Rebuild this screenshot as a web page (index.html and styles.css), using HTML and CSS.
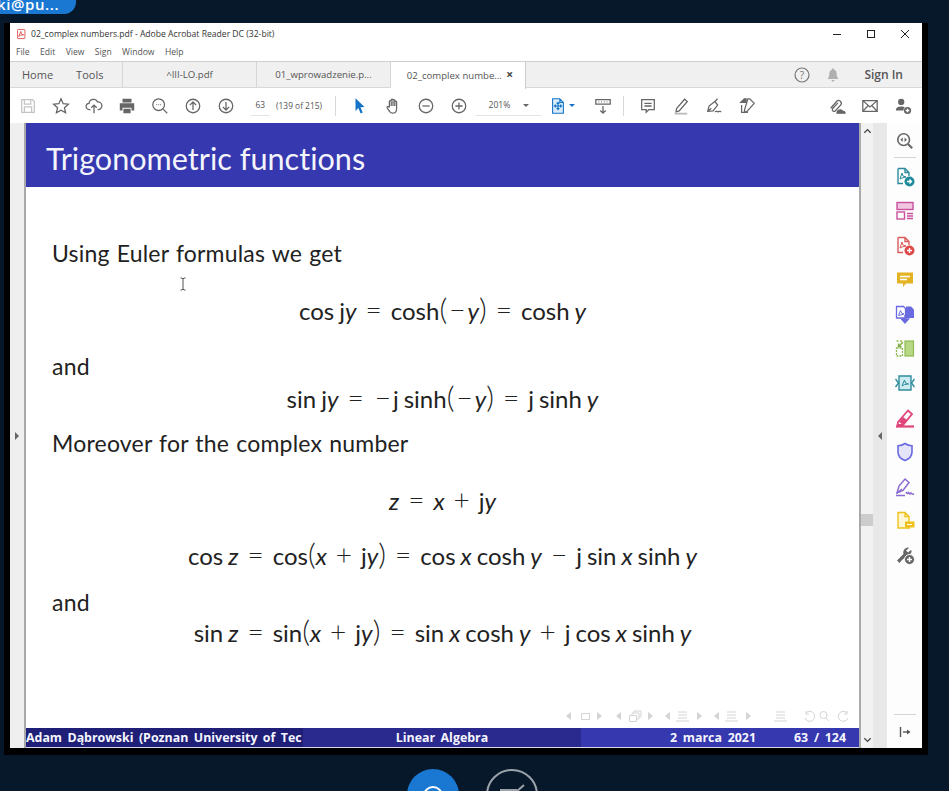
FILE: index.html
```html
<!DOCTYPE html>
<html lang="pl">
<head>
    <meta charset="UTF-8">
    <meta name="viewport" content="width=device-width, initial-scale=1.0">
    <title>02_complex numbers.pdf - Adobe Acrobat Reader DC (32-bit)</title>
    <link rel="stylesheet" href="styles.css">
</head>
<body>
    <div class="name-pill"><span>ki@pu...</span></div>

    <div class="frame">
        <div class="title-bar">
            <svg class="pdf-icon" viewBox="0 0 12 12"><rect x="0.5" y="0.5" width="9" height="11" rx="1" fill="#fff" stroke="#d9453d"/><path d="M2 9l2.5-6 1 3 2.5 1-4 .5z" fill="none" stroke="#d9453d" stroke-width="1"/></svg>
            <span class="title-text">02_complex numbers.pdf - Adobe Acrobat Reader DC (32-bit)</span>
            <div class="win-buttons">
                <svg viewBox="0 0 12 12"><path d="M2 6.500h8" stroke="#222" stroke-width="1"/></svg>
                <svg viewBox="0 0 12 12"><rect x="2.500" y="2.500" width="7" height="7" fill="none" stroke="#222"/></svg>
                <svg viewBox="0 0 12 12"><path d="M2 2l8 8M10 2l-8 8" stroke="#222" stroke-width="1"/></svg>
            </div>
        </div>
        <div class="menu-bar">
            <span>File</span><span>Edit</span><span>View</span><span>Sign</span><span>Window</span><span>Help</span>
        </div>

        <div class="tab-bar">
            <div class="tab-home"><span>Home</span><span>Tools</span></div>
            <div class="tab">^III-LO.pdf</div>
            <div class="tab">01_wprowadzenie.p...</div>
            <div class="tab active">02_complex numbe... <b class="tab-close">×</b></div>
            <div class="tab-right">
                <svg class="ico16" viewBox="0 0 16 16"><circle cx="8" cy="8" r="7" fill="none" stroke="#777" stroke-width="1.200"/><text x="8" y="11.500" class="help-mark">?</text></svg>
                <svg class="ico16" viewBox="0 0 16 16"><path d="M8 1.500c-.8 0-1.200.6-1.200 1.200C5 3.300 4.300 5 4.300 7c0 2.500-.8 3.500-1.800 5h11c-1-1.500-1.800-2.500-1.800-5 0-2-.7-3.700-2.500-4.300C9.200 2.100 8.800 1.500 8 1.500zM6.500 13a1.500 1.500 0 003 0z" fill="#b0b0b0"/></svg>
                <span class="sign-in">Sign In</span>
            </div>
        </div>

        <div class="tool-bar">
            <div class="tool"><svg viewBox="0 0 20 20" class="light"><path d="M3 3h12l2 2v12H3zM6 3v5h7V3M6 17v-6h8v6"/></svg></div>
            <div class="tool"><svg viewBox="0 0 20 20"><path d="M10 2l2.400 5.400 5.800.6-4.400 3.900 1.300 5.700-5.100-3-5.100 3 1.300-5.700L1.800 8l5.800-.6z"/></svg></div>
            <div class="tool"><svg viewBox="0 0 20 20"><path d="M6 14H5a3.500 3.500 0 01-.5-7A5 5 0 0114 5.500a4 4 0 011 8.500h-1M10 18V9M7 12l3-3 3 3"/></svg></div>
            <div class="tool"><svg viewBox="0 0 20 20" class="solid"><path d="M5 2h10v4H5zM2 7h16v8h-3v-3H5v3H2zM6 13h8v5H6z"/></svg></div>
            <div class="tool"><svg viewBox="0 0 20 20"><circle cx="8.500" cy="8.500" r="6.500"/><path d="M13.500 13.500L18 18M6 8.500h.8M8.200 8.500h.8M10.400 8.500h.8"/></svg></div>
            <div class="tool"><svg viewBox="0 0 20 20"><circle cx="10" cy="10" r="7.500"/><path d="M10 14.500v-9M6.500 9L10 5.500 13.500 9"/></svg></div>
            <div class="tool"><svg viewBox="0 0 20 20"><circle cx="10" cy="10" r="7.500"/><path d="M10 5.500v9M6.500 11l3.500 3.500 3.500-3.500"/></svg></div>
            <div class="page-box"><span class="page-num">63</span><span>(139 of 215)</span></div>
            <div class="tool-sep"></div>
            <div class="tool"><svg viewBox="0 0 20 20" class="blue"><path d="M5 1.500l10 9.500-4.500.3 2.500 6-2.300 1-2.500-6L5 15.500z"/></svg></div>
            <div class="tool"><svg viewBox="0 0 20 20"><path d="M6 11V5a1 1 0 012 0V3.500a1 1 0 012 0V4a1 1 0 012 0v1.500a1 1 0 012 0V13c0 3-2 5-4.500 5S7 17 5.500 15L3.500 12c-.6-1 .7-2 1.500-1z"/><path d="M8 5v5M10 4v6M12 5v5"/></svg></div>
            <div class="tool"><svg viewBox="0 0 20 20"><circle cx="10" cy="10" r="7.500"/><path d="M6 10h8"/></svg></div>
            <div class="tool"><svg viewBox="0 0 20 20"><circle cx="10" cy="10" r="7.500"/><path d="M6 10h8M10 6v8"/></svg></div>
            <div class="zoom-box"><span>201%</span><i class="caret"></i></div>
            <div class="tool tool-fit"><svg viewBox="0 0 20 20" class="blue-line"><path d="M4 2h8l4 4v12H4zM12 2v4h4M10 6v8M6 10h8M8.500 7.500L10 6l1.500 1.500M8.500 12.500L10 14l1.500-1.500M7.500 8.500L6 10l1.500 1.500M12.500 8.500L14 10l-1.500 1.500"/></svg><i class="caret blue-caret"></i></div>
            <div class="tool tool-ruler"><svg viewBox="0 0 20 20"><path d="M2 3h16v5H2zM5 5.500h.8M8 5.500h.8M11 5.500h.8M14 5.500h.8M10 10v8M7 15l3 3 3-3"/></svg></div>
            <div class="tool-sep sep-b"></div>
            <div class="tool"><svg viewBox="0 0 20 20"><path d="M3 3h14v11h-6l-3 3v-3H3zM6 7h8M6 10h8"/></svg></div>
            <div class="tool"><svg viewBox="0 0 20 20"><path d="M5 13L14 2.500l3 2.500-9 10.500-3.500 1z"/><path d="M3 18.500h14" stroke="#bbb" stroke-width="2"/></svg></div>
            <div class="tool"><svg viewBox="0 0 20 20"><path d="M3 16l1.500-6L11 5l3 4-5 6.500zM3 16l4-3.500M11 5l3-3M11 16c1 1 1.500-1 2.500 0s1.500 0 2.500 0 1 .5 2 0"/></svg></div>
            <div class="tool"><svg viewBox="0 0 20 20"><path d="M9 2H7L3 6h6z" class="fill"/><path d="M11 2l2 0 5 5-8 9-3 1 .5-3.500zM4 9v8h7"/></svg></div>
            <div class="tool-right">
                <div class="tool"><svg viewBox="0 0 20 20"><path d="M3 12.500L9.500 5a3 3 0 014.500 4L8 15.500a2 2 0 01-3-2.500l6-6.500"/><path d="M10 18a3.500 3.500 0 016.500-2A2 2 0 0119 18z" class="fill"/></svg></div>
                <div class="tool"><svg viewBox="0 0 20 20"><path d="M2 4h16v12H2zM2 4l8 7 8-7M2 16l6-6.500M18 16l-6-6.500"/></svg></div>
                <div class="tool"><svg viewBox="0 0 20 20" class="solid"><circle cx="8" cy="5.500" r="3.500"/><path d="M2 15c0-3 2-4.500 6-4.500 2 0 3 .4 4 1a4.500 4.500 0 00-1.500 3.500z"/><circle cx="15" cy="15" r="4"/><path d="M13 15h4M15 13v4" class="plus"/></svg></div>
            </div>
        </div>

        <div class="work-area">
            <div class="left-gutter"><i class="tri-right"></i></div>

            <div class="slide">
                <h1 class="slide-title">Trigonometric functions</h1>
                <div class="slide-body">
                    <p class="line l1">Using Euler formulas we get</p>
                    <p class="math l2">cos<span class="thin"></span>j<em>y</em><span class="op">=</span>cosh<span class="par">(</span><span class="minus">−</span><em>y</em><span class="par">)</span><span class="op">=</span>cosh<span class="thin"></span><em>y</em></p>
                    <p class="line l3">and</p>
                    <p class="math l4">sin<span class="thin"></span>j<em>y</em><span class="op">=</span><span class="minus">−</span>j<span class="thin"></span>sinh<span class="par">(</span><span class="minus">−</span><em>y</em><span class="par">)</span><span class="op">=</span>j<span class="thin"></span>sinh<span class="thin"></span><em>y</em></p>
                    <p class="line l5">Moreover for the complex number</p>
                    <p class="math l6"><em>z</em><span class="op">=</span><em>x</em><span class="op">+</span>j<em>y</em></p>
                    <p class="math l7">cos<span class="thin"></span><em>z</em><span class="op">=</span>cos<span class="par">(</span><em>x</em><span class="op">+</span>j<em>y</em><span class="par">)</span><span class="op">=</span>cos<span class="thin"></span><em>x</em><span class="thin"></span>cosh<span class="thin"></span><em>y</em><span class="op">−</span>j<span class="thin"></span>sin<span class="thin"></span><em>x</em><span class="thin"></span>sinh<span class="thin"></span><em>y</em></p>
                    <p class="line l8">and</p>
                    <p class="math l9">sin<span class="thin"></span><em>z</em><span class="op">=</span>sin<span class="par">(</span><em>x</em><span class="op">+</span>j<em>y</em><span class="par">)</span><span class="op">=</span>sin<span class="thin"></span><em>x</em><span class="thin"></span>cosh<span class="thin"></span><em>y</em><span class="op">+</span>j<span class="thin"></span>cos<span class="thin"></span><em>x</em><span class="thin"></span>sinh<span class="thin"></span><em>y</em></p>
                </div>
                <div class="beamer-nav">
                    <svg viewBox="0 0 286 12" width="286" height="12">
                        <g fill="#d4d4d4"><path d="M0 6l5-4v8zM31 2l5 4-5 4zM50 6l5-4v8zM82 2l5 4-5 4zM99 6l5-4v8zM131 2l5 4-5 4zM148 6l5-4v8zM180 2l5 4-5 4z"/></g>
                        <g fill="none" stroke="#d4d4d4"><rect x="15.500" y="3.500" width="8" height="6"/><path d="M63.500 5.500h7v6h-7zM66 5V3h7v6h-2M68 3V1h7v6h-2M112 2h9M112 5h9M112 8h9M110 11h13M161 2h9M161 5h9M161 8h9M159 11h13M210 2h9M210 5h9M210 8h9M208 11h13"/><path d="M240 3a5 5 0 11-1 5M240 1v3h3M254 5a3.500 3.500 0 107 0 3.500 3.500 0 10-7 0M260 8l3 3M281 3a5 5 0 10 1 5M281 1v3h-3"/></g>
                    </svg>
                </div>
                <div class="slide-foot">
                    <div class="foot-a">Adam Dąbrowski (Poznan University of Tec</div>
                    <div class="foot-b">Linear Algebra</div>
                    <div class="foot-c"><span>2 marca 2021</span><span>63 / 124</span></div>
                </div>
            </div>

            <div class="scroll-col">
                <svg class="chev" viewBox="0 0 10 6"><path d="M1.500 5L5 1.500 8.500 5" fill="none" stroke="#444" stroke-width="1.400"/></svg>
                <div class="thumb"></div>
                <svg class="chev" viewBox="0 0 10 6"><path d="M1.500 1L5 4.500 8.500 1" fill="none" stroke="#444" stroke-width="1.400"/></svg>
            </div>
            <div class="panel-bar"><i class="tri-left"></i></div>

            <div class="side-panel">
                <svg viewBox="0 0 20 20" class="side-top"><g fill="none" stroke="#666" stroke-width="1.800"><circle cx="8.500" cy="8.500" r="6.500"/><path d="M13.500 13.500L18 18" stroke-width="2.400"/></g><path d="M7.500 6L4.800 8.500 7.500 11zM9.500 6l2.700 2.500L9.500 11z" fill="#666"/></svg>
                <div class="side-sep"></div>
                <div class="side-list">
                    <svg viewBox="0 0 20 20"><g fill="none" stroke="#2d8c9c" stroke-width="1.400"><path d="M3 1.500h7l4 4V9M3 1.500v15h5M10 1.500v4h4"/><path d="M5 12l2-6 1 3 3 1-4 1z" stroke-width="1"/></g><circle cx="14.500" cy="14.500" r="5" fill="#1f8a9c"/><path d="M12 14.500h4.500M14.500 12.500l2 2-2 2" fill="none" stroke="#fff" stroke-width="1.300"/></svg>
                    <svg viewBox="0 0 20 20"><g fill="none" stroke="#c9509b" stroke-width="1.400"><rect x="2" y="1.500" width="16" height="7" fill="#f0c6e0"/><rect x="2" y="11" width="7.500" height="7"/><path d="M12 12.500h6M12 15h6M12 17.500h6"/></g></svg>
                    <svg viewBox="0 0 20 20"><g fill="none" stroke="#dc5a5a" stroke-width="1.400"><path d="M3 1.500h7l4 4V9M3 1.500v15h5M10 1.500v4h4"/><path d="M5 12l2-6 1 3 3 1-4 1z" stroke-width="1"/></g><circle cx="14.500" cy="14.500" r="5" fill="#dc4a4a"/><path d="M12 14.500h5M14.500 12v5" stroke="#fff" stroke-width="1.400"/></svg>
                    <svg viewBox="0 0 20 20"><path d="M2 2.500h16v11h-7l-3 3.500v-3.500H2z" fill="#e3b324"/><path d="M5 6.500h10M5 9.500h7" stroke="#fff" stroke-width="1.400"/></svg>
                    <svg viewBox="0 0 20 20"><path d="M11 1.500h5l3 3V13h-8z" fill="#6a6ae0"/><path d="M1.500 1.500h7l2 2V13h-9z" fill="#fff" stroke="#6a6ae0" stroke-width="1.300"/><path d="M3.500 10.500l2-5 1 2.500 2.500 1z" fill="none" stroke="#6a6ae0"/><path d="M10 10v7M6.500 14l3.500 4 3.500-4z" fill="#6a6ae0" stroke="#6a6ae0" stroke-width="1.400"/></svg>
                    <svg viewBox="0 0 20 20"><rect x="10" y="2" width="8.500" height="15" fill="#b6d884" stroke="#8dbb4f" stroke-width="1.200"/><path d="M1.500 9h6v8h-6zM1.500 2h2M5 2h2.500" fill="none" stroke="#8dbb4f" stroke-width="1.300" stroke-dasharray="2 1"/><path d="M8 3L3.500 7.500M3.500 4.500v3h3" fill="none" stroke="#7dab3f" stroke-width="1.400"/></svg>
                    <svg viewBox="0 0 20 20"><path d="M4 3h12v14H4z" fill="#cdebf0" stroke="#2d8c9c" stroke-width="1.400"/><path d="M7 13l2.500-6 1 3 3 1-4 .5z" fill="none" stroke="#2d8c9c"/><path d="M0.500 6l3 4-3 4M19.500 6l-3 4 3 4" fill="none" stroke="#2d8c9c" stroke-width="1.400"/></svg>
                    <svg viewBox="0 0 20 20"><path d="M3 14L13 2.500l4 3.500-9 11H2.500z" fill="none" stroke="#e0457b" stroke-width="1.800"/><path d="M1 18.500h18" stroke="#e0457b" stroke-width="2.200"/><path d="M4 14l4 3 4-5-4-3z" fill="#e0457b"/></svg>
                    <svg viewBox="0 0 20 20"><path d="M10 1.500c2 1.500 4.500 2.200 7 2.200V10c0 4-3 7-7 8.500C6 17 3 14 3 10V3.700c2.500 0 5-.7 7-2.200z" fill="#e4e4fa" stroke="#6a6ae0" stroke-width="1.600"/></svg>
                    <svg viewBox="0 0 20 20"><g fill="none" stroke="#8a6ad0" stroke-width="1.500"><path d="M2 16L4 9l6-7 4 3.500-6 8z"/><path d="M2 16l5-4M1 18.500h9M11 15c1 2 1.500 2 2.500.5 1 1.500 1.500 2 2.500.5 1 1 2 1.500 3 1"/></g></svg>
                    <svg viewBox="0 0 20 20"><path d="M3 1.500h7l4 4V17H3zM10 1.500v4h4" fill="#fff7d6" stroke="#eec21b" stroke-width="1.400"/><path d="M10 10.500h9.500v6H15l-2 2v-2h-3z" fill="#eec21b"/><path d="M12 13.500h5" stroke="#fff"/></svg>
                    <svg viewBox="0 0 20 20"><path d="M2 15.500l6.500-6.500c-.8-2.500.5-6 4.500-6.500l.8.800L11 5.500l2 2 2.800-2.500.8.8c0 2-1 3.500-3 4L7 15l-2.500 3z" fill="#666"/><circle cx="14.500" cy="14.500" r="5" fill="#666" stroke="#fdfdfd"/><path d="M12 14.500h5M14.500 12v5" stroke="#fff" stroke-width="1.400"/></svg>
                </div>
                <div class="side-sep side-sep-low"></div>
                <svg viewBox="0 0 14 14" class="side-collapse"><path d="M2.500 2v10" stroke="#555" stroke-width="1.400"/><path d="M5 7h5" stroke="#555" stroke-width="1.400"/><path d="M9 4.500L12.500 7 9 9.500z" fill="#555"/></svg>
            </div>

            <svg class="i-beam" viewBox="0 0 8 14"><path d="M1.500 1H3l1 1 1-1h1.500M4 2v10M1.500 13H3l1-1 1 1h1.500" fill="none" stroke="#555"/></svg>
        </div>
    </div>

    <div class="call-row">
        <div class="call-btn blue-btn"><svg viewBox="0 0 52 52"><circle cx="26" cy="27" r="9" fill="none" stroke="#fff" stroke-width="2"/></svg></div>
        <div class="call-btn ghost-btn"><svg viewBox="0 0 48 48"><path d="M13 19h15v14H13zM28 24l7-3M11 36l25-22" fill="none" stroke="#9aa3ab" stroke-width="2"/></svg></div>
    </div>
</body>
</html>
```

FILE: styles.css
```css
html, body {
    margin: 0;
    padding: 0;
    height: 791px;
    overflow: hidden;
}

body {
    background-color: #07182a;
    font-family: "Liberation Sans", Arial, sans-serif;
    color: #333;
}

.name-pill {
    width: 76px;
    height: 14px;
    background-color: #1a78d2;
    border-bottom-right-radius: 12px;
    overflow: hidden;
    margin-bottom: 9px;
    color: white;
    font-family: "Open Sans", sans-serif;
    font-size: 15px;
    font-weight: 600;
    line-height: 9px;
    white-space: nowrap;
}

.name-pill span {
    margin-left: -3px;
    display: block;
    letter-spacing: 0.6px;
}

.frame {
    width: 912px;
    height: 725px;
    margin-left: 4px;
    border-left: 6px solid #000;
    border-right: 6px solid #000;
    border-bottom: 7px solid #000;
    background-color: #fff;
    display: flex;
    flex-direction: column;
}

/* title + menu */
.title-bar {
    height: 22px;
    display: flex;
    align-items: center;
    padding-left: 7px;
    font-size: 9px;
    color: #333;
}

.pdf-icon {
    width: 10px;
    height: 12px;
    margin-right: 4px;
}

.title-text {
    font-family: "Open Sans", sans-serif;
    font-size: 8.6px;
    white-space: nowrap;
}

.win-buttons {
    margin-left: auto;
    display: flex;
    gap: 22px;
    padding-right: 11px;
}

.win-buttons svg {
    width: 12px;
    height: 12px;
}

.menu-bar {
    height: 16px;
    display: flex;
    gap: 10.4px;
    padding-left: 6px;
    font-family: "Open Sans", sans-serif;
    font-size: 8.6px;
    line-height: 15px;
    color: #555;
}

/* tabs */
.tab-bar {
    height: 27px;
    box-sizing: border-box;
    display: flex;
    background-color: #f0f0f0;
    border-top: 1px solid #cfcfcf;
    border-bottom: 1px solid #d8d8d8;
    font-family: "Open Sans", sans-serif;
    color: #555;
    font-size: 9.6px;
    line-height: 25px;
}

.tab-home {
    width: 113px;
    display: flex;
    gap: 23px;
    padding-left: 12px;
    box-sizing: border-box;
    font-size: 11px;
    border-right: 1px solid #d6d6d6;
}

.tab {
    width: 134px;
    box-sizing: border-box;
    text-align: center;
    border-right: 1px solid #d6d6d6;
    white-space: nowrap;
}

.tab.active {
    width: 135px;
    height: 27px;
    background-color: #fff;
    border-right: 1px solid #ccc;
    padding-left: 4px;
}

.tab-close {
    font-size: 12px;
    color: #444;
    margin-left: 2px;
}

.tab-right {
    margin-left: auto;
    display: flex;
    align-items: center;
    padding-right: 19px;
}

.ico16 {
    width: 16px;
    height: 16px;
    margin-right: 15px;
}

.help-mark {
    font-size: 10px;
    text-anchor: middle;
    fill: #777;
    font-family: "Open Sans", sans-serif;
}

.sign-in {
    font-size: 12px;
    font-weight: 600;
    color: #555;
    margin-left: 8px;
}

/* toolbar */
.tool-bar {
    height: 35px;
    box-sizing: border-box;
    display: flex;
    align-items: center;
    padding-left: 1.5px;
    font-family: "Open Sans", sans-serif;
    font-size: 8.4px;
    color: #555;
}

.tool {
    width: 33px;
    flex: none;
    display: flex;
    justify-content: center;
    align-items: center;
}

.tool svg {
    width: 18px;
    height: 18px;
    fill: none;
    stroke: #666;
    stroke-width: 1.400;
}

.tool svg.light {
    stroke: #c4c4c4;
}

.tool svg.solid {
    fill: #666;
    stroke: none;
}

.tool svg.blue {
    fill: #1473c6;
    stroke: none;
}

.tool svg.blue-line {
    stroke: #1473c6;
    stroke-width: 1.200;
    fill: #d8ecfa;
}

.tool svg .fill {
    fill: #666;
}

.tool svg .plus {
    stroke: #fff;
    stroke-width: 1.400;
}

.page-box {
    width: 92px;
    flex: none;
    box-sizing: border-box;
    display: flex;
    align-items: center;
    gap: 11px;
    padding-left: 13px;
    white-space: nowrap;
}

.page-num {
    border-bottom: 1px solid #e4e4e4;
    line-height: 20px;
    padding: 0 5px;
    margin: 0 -5px;
}

.tool-sep {
    width: 1px;
    height: 20px;
    flex: none;
    background-color: #d8d8d8;
    margin-right: 8px;
}

.zoom-box {
    width: 65px;
    flex: none;
    box-sizing: border-box;
    display: flex;
    align-items: center;
    justify-content: space-between;
    padding: 0 12px 0 13px;
    font-size: 8.6px;
    line-height: 20px;
    position: relative;
    border-bottom: 1px solid #e4e4e4;
}

.caret {
    width: 0;
    height: 0;
    border-left: 3px solid transparent;
    border-right: 3px solid transparent;
    border-top: 3px solid #666;
}

.blue-caret {
    border-top-color: #1473c6;
    margin-left: 2px;
}

.tool-fit {
    width: 42px;
    padding-left: 0;
}

.tool-ruler {
    width: 40px;
}

.sep-b {
    margin-right: 8px;
}

.tool-right {
    margin-left: auto;
    display: flex;
    padding-right: 3px;
}

/* main area */
.work-area {
    flex: 1;
    min-height: 0;
    display: flex;
    position: relative;
}

.left-gutter {
    width: 14px;
    flex: none;
    background-color: #efefef;
    border-right: 2px solid #a9a9a9;
    display: flex;
    align-items: center;
    justify-content: center;
}

.tri-right {
    border-left: 4px solid #666;
    border-top: 4px solid transparent;
    border-bottom: 4px solid transparent;
    margin-top: 0;
}

.tri-left {
    border-right: 4px solid #666;
    border-top: 4px solid transparent;
    border-bottom: 4px solid transparent;
}

.slide {
    width: 833px;
    flex: none;
    display: flex;
    flex-direction: column;
    background-color: #fff;
    color: #222;
    font-variant-ligatures: none;
}

.slide-title {
    height: 64px;
    margin: 0;
    background-color: #3538ae;
    color: #f4f4fb;
    font-family: Lato, sans-serif;
    font-weight: 400;
    font-size: 30.6px;
    line-height: 72px;
    padding-left: 20px;
    white-space: nowrap;
}

.slide-body {
    font-family: Lato, sans-serif;
    font-size: 24px;
    line-height: 30px;
}

.slide-body p {
    margin: 0;
}

.line {
    padding-left: 26px;
    font-size: 23px;
    letter-spacing: 0.2px;
    word-spacing: 1px;
    white-space: nowrap;
}

.math {
    text-align: center;
    white-space: nowrap;
}

.math em {
    font-style: italic;
}

.thin {
    display: inline-block;
    width: 5px;
}

.op {
    margin: 0 9px;
    font-weight: 300;
    font-size: 28px;
    line-height: 20px;
}

.minus {
    margin: 0 2px;
    font-weight: 300;
    font-size: 28px;
    line-height: 20px;
}

.par {
    font-size: 30px;
    font-weight: 300;
    line-height: 20px;
}

.l1 { margin-top: 51px !important; }
.l2 { margin-top: 28px !important; }
.l3 { margin-top: 25px !important; }
.l4 { margin-top: 3px !important; }
.l5 { margin-top: 14px !important; }
.l6 { margin-top: 28px !important; }
.l7 { margin-top: 25px !important; }
.l8 { margin-top: 16px !important; }
.l9 { margin-top: 1px !important; }

.beamer-nav {
    margin-top: auto;
    height: 12px;
    margin-bottom: 6px;
    padding-left: 540px;
    display: flex;
}

.slide-foot {
    height: 20px;
    box-sizing: border-box;
    display: flex;
    border-bottom: 1px solid #d8d8e8;
    color: #f6f6ff;
    font-family: "Open Sans", sans-serif;
    font-weight: 700;
    font-size: 12.4px;
    line-height: 20px;
    white-space: nowrap;
}

.foot-a {
    width: 277px;
    flex: none;
    background-color: #1f1f78;
    word-spacing: 2.200px;
}

.foot-b {
    width: 278px;
    flex: none;
    background-color: #2a2a8e;
    text-align: center;
    word-spacing: 2.200px;
}

.foot-c {
    flex: 1;
    background-color: #3538ae;
    display: flex;
    justify-content: flex-end;
    gap: 38px;
    padding-right: 13px;
    word-spacing: 2.500px;
}

.scroll-col {
    width: 12px;
    flex: none;
    box-sizing: content-box;
    border-left: 2px solid #aaaaaa;
    background-color: #f2f2f2;
    display: flex;
    flex-direction: column;
    align-items: center;
    justify-content: space-between;
    padding: 5px 0;
    position: relative;
}

.chev {
    width: 9px;
    height: 6px;
}

.thumb {
    position: absolute;
    top: 391px;
    left: 0;
    width: 12px;
    height: 12px;
    background-color: #cdcdcd;
}

.panel-bar {
    width: 14px;
    flex: none;
    background-color: #e8e8e8;
    display: flex;
    align-items: center;
    justify-content: center;
}

.side-panel {
    flex: 1;
    background-color: #fdfdfd;
    display: flex;
    flex-direction: column;
    align-items: center;
    padding-top: 9px;
}

.side-top {
    width: 18px;
    height: 18px;
}

.side-sep {
    width: 22px;
    height: 1px;
    background-color: #d4d4d4;
    margin-top: 7px;
}

.side-list {
    display: flex;
    flex-direction: column;
    gap: 14.400px;
    margin-top: 9px;
}

.side-list svg {
    width: 20px;
    height: 20px;
    display: block;
}

.side-sep-low {
    margin-top: auto;
}

.side-collapse {
    width: 14px;
    height: 14px;
    margin: 10px 0 9px;
}

.i-beam {
    position: absolute;
    left: 169px;
    top: 154px;
    width: 8px;
    height: 14px;
}

/* call buttons under the shared screen */
.call-row {
    display: flex;
    gap: 27px;
    padding-left: 407px;
    margin-top: 14px;
}

.call-btn {
    width: 52px;
    height: 52px;
    box-sizing: border-box;
    border-radius: 50%;
    flex: none;
}

.call-btn svg {
    width: 100%;
    height: 100%;
    display: block;
}

.blue-btn {
    background-color: #1a78d2;
}

.ghost-btn {
    border: 2px solid #9aa3ab;
}
```
